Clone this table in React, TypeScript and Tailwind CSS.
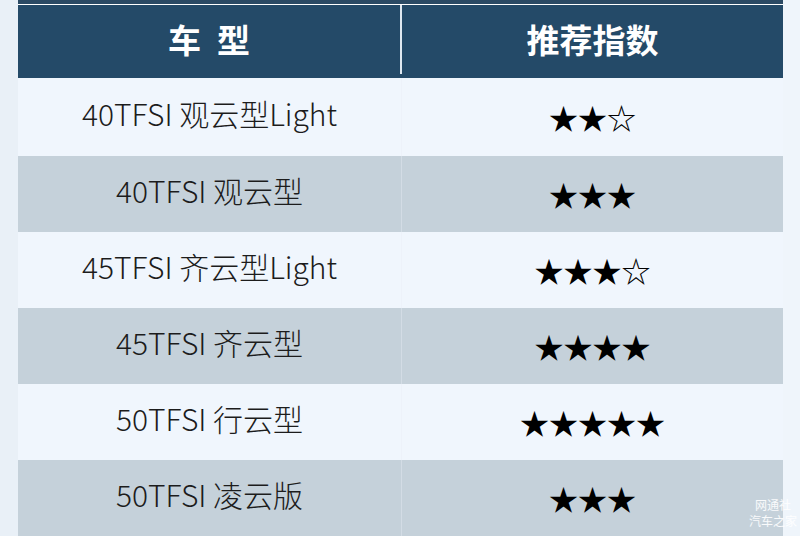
import React from "react";

const rows: [string, string][] = [
  ["40TFSI 观云型Light", "★★☆"],
  ["40TFSI 观云型", "★★★"],
  ["45TFSI 齐云型Light", "★★★☆"],
  ["45TFSI 齐云型", "★★★★"],
  ["50TFSI 行云型", "★★★★★"],
  ["50TFSI 凌云版", "★★★"],
];

export default function App() {
  return (
    <div
      className="relative w-[800px] h-[536px] overflow-hidden bg-[#eef4fa] flex"
      style={{ fontFamily: '"Noto Sans CJK SC", "Noto Sans", sans-serif' }}
    >
      <div className="w-[18px] bg-[#e9f0f7]" />
      <div className="w-[765px] flex flex-col">
        <div className="h-[4px] bg-[#2b4a64]" />
        <div className="h-[1px] bg-white" />
        <div className="h-[73px] bg-[#244a68] flex text-white font-bold text-[33px] pb-[4px]">
          <div className="w-[382px] flex items-center justify-center">
            <span>车</span>
            <span className="ml-[16px]">型</span>
          </div>
          <div className="w-[2px] bg-[#dfe8f0]" />
          <div className="flex-1 flex items-center justify-center">推荐指数</div>
        </div>
        {rows.map(([name, stars], i) => (
          <div
            key={i}
            className={`${i === 0 ? "h-[78px]" : "h-[76px]"} flex ${
              i % 2 === 0 ? "bg-[#f0f6fd]" : "bg-[#c5d1da]"
            }`}
          >
            <div className="w-[383px] flex items-center justify-center text-[30px] font-light text-[#1c1c1c] pb-[8px]">
              {name}
            </div>
            <div className="w-[1px] bg-[#e8eef4] opacity-40" />
            <div className="flex-1 flex items-center justify-center text-[29px] text-black pt-[2px]">{stars}</div>
          </div>
        ))}
      </div>
      <div className="flex-1 bg-[#eff5fb]" />
      <div className="absolute right-[3px] bottom-[8px] flex flex-col items-end gap-[2px] text-white/90 text-[12px] leading-[14px]">
        <div className="pr-[6px]">网通社</div>
        <div>汽车之家</div>
      </div>
    </div>
  );
}
